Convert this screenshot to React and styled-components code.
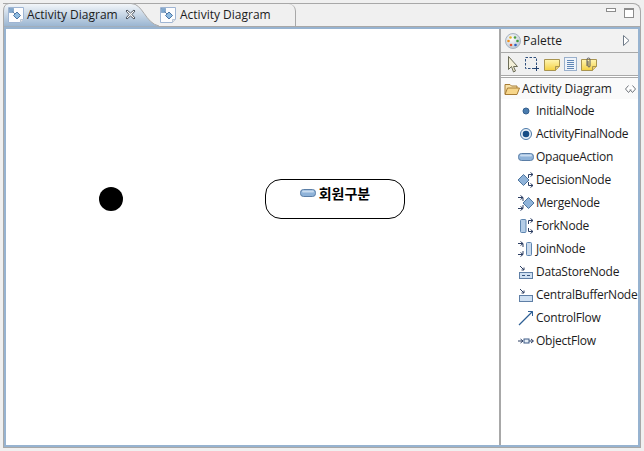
import React from "react";
import styled, { createGlobalStyle } from "styled-components";

const GlobalStyle = createGlobalStyle`
  html, body {
    margin: 0;
    padding: 0;
    background: #f0f0f0;
  }
`;

const FONT = `"Open Sans", "Noto Sans", "Liberation Sans", "Noto Sans CJK KR", sans-serif`;

/* ---- small drawings ---- */

const DiagramIcon = () => (
  <svg width="16" height="16" viewBox="0 0 16 16">
    <path d="M.5.5h15v12l-3 3H.5z" fill="#fdfdfe" stroke="#9fb5d3" />
    <rect x="1.500" y="1.500" width="4" height="4" fill="#7fa8cf" stroke="#6a8fb8" strokeWidth=".6" />
    <path d="M4.500 4.500L7 7" stroke="#5d7fa8" />
    <path d="M9 5l3.500 3.500L9 12 5.500 8.500z" fill="#8fbbe0" stroke="#4d76a5" />
    <path d="M12.500 15.500v-3h3" fill="#e4e4e4" stroke="#b8c4d4" />
  </svg>
);

const CloseIcon = () => (
  <svg width="11" height="11" viewBox="0 0 11 11">
    <path
      d="M1 2l1-1 3.500 3L9 1l1 1-3 3.500L10 9l-1 1-3.500-3L2 10 1 9l3-3.500z"
      fill="#fbfbfb"
      stroke="#4f5660"
    />
  </svg>
);

const PaletteIcon = () => (
  <svg width="16" height="16" viewBox="0 0 16 16">
    <defs>
      <radialGradient id="pal" cx="40%" cy="35%" r="70%">
        <stop offset="0" stopColor="#ffffff" />
        <stop offset="1" stopColor="#b8c4d2" />
      </radialGradient>
    </defs>
    <circle cx="8" cy="8" r="7.500" fill="url(#pal)" stroke="#a9b4c0" />
    <circle cx="5.500" cy="4.500" r="1.300" fill="#e2b02c" />
    <circle cx="10" cy="4.500" r="1.300" fill="#4aa03c" />
    <circle cx="3.500" cy="8" r="1.300" fill="#ef8f1e" />
    <circle cx="12.500" cy="8" r="1.300" fill="#3f9a3a" />
    <circle cx="6" cy="12" r="1.300" fill="#e0502c" />
    <circle cx="10.500" cy="12" r="1.300" fill="#2f5fc0" />
  </svg>
);

const ArrowTool = () => (
  <svg width="15" height="17" viewBox="0 0 15 17">
    <path d="M3.500 .5v13l3-3 2 5.500 2-1-2-4.500h4z" fill="#f3efd8" stroke="#6d6d58" />
  </svg>
);

const MarqueeTool = () => (
  <svg width="16" height="16" viewBox="0 0 16 16">
    <rect x="1.500" y="1.500" width="11" height="11" fill="none" stroke="#2f4f7c" strokeDasharray="2.500 1.500" />
    <path d="M12.500 10v5M10 12.500h5" stroke="#22406e" />
  </svg>
);

const NoteShape = ({ clip }) => (
  <svg width="16" height="14" viewBox="0 0 16 14">
    <defs>
      <linearGradient id="note" x1="0" y1="0" x2="0" y2="1">
        <stop offset="0" stopColor="#fff6b4" />
        <stop offset="1" stopColor="#f4d040" />
      </linearGradient>
    </defs>
    <path d="M.5 2.500h15v7l-4 4H.5z" fill="url(#note)" stroke="#a89450" />
    <path d="M11.500 13.500v-4h4" fill="#e8cc70" stroke="#a89450" />
    {clip && (
      <path d="M6 9V2.500a1.500 1.500 0 0 1 3 0V9a1 1 0 0 1-2 0V4" fill="none" stroke="#5a5a60" />
    )}
  </svg>
);

const TextTool = () => (
  <svg width="13" height="14" viewBox="0 0 13 14">
    <rect x=".5" y=".5" width="12" height="13" fill="#eef3fa" stroke="#9ab0cc" />
    <path d="M3 3.500h7M3 5.500h7M3 7.500h7M3 9.500h7M3 11.500h7" stroke="#5f86b6" />
  </svg>
);

const FolderIcon = () => (
  <svg width="16" height="14" viewBox="0 0 16 14">
    <path d="M1 12V2.500h5l1.500 1.500H13v2" fill="#f9e2a8" stroke="#a77c35" />
    <path d="M1 12.500l2.500-6.500h12L13 12.500z" fill="#f7d68a" stroke="#a77c35" />
  </svg>
);

const SplitArrows = () => (
  <path
    d="M10.500 6V2.500H15M12.500.5l2.500 2-2.500 2M10.500 10v3.500H15M12.500 11.500l2.500 2-2.500 2"
    fill="none"
    stroke="#2c3e63"
  />
);

const MergeArrows = () => (
  <path
    d="M0 2.500h5V6M0 13.500h5V10M2.500.5l2.500 2-2.500 2M2.500 11.500l2.500 2-2.500 2"
    fill="none"
    stroke="#2c3e63"
  />
);

const blueFill = "#8fb3d9";

const ICONS = {
  initial: (
    <svg width="16" height="16" viewBox="0 0 16 16">
      <circle cx="8" cy="8" r="3" fill="#4a7cae" stroke="#35608f" />
    </svg>
  ),
  final: (
    <svg width="16" height="16" viewBox="0 0 16 16">
      <circle cx="8" cy="8" r="5.500" fill="#eaf1f8" stroke="#4a78a8" />
      <circle cx="8" cy="8" r="3.300" fill="#174d86" />
    </svg>
  ),
  action: (
    <svg width="16" height="16" viewBox="0 0 16 16">
      <rect x=".5" y="4.500" width="15" height="7" rx="3" fill={blueFill} stroke="#5b7ea6" />
      <rect x="2" y="5.500" width="12" height="2" rx="1" fill="#c9dcef" />
    </svg>
  ),
  decision: (
    <svg width="16" height="16" viewBox="0 0 16 16">
      <path d="M5.500 2.500l5.500 5.500-5.500 5.500L0 8z" fill={blueFill} stroke="#4f769f" />
      <SplitArrows />
    </svg>
  ),
  merge: (
    <svg width="16" height="16" viewBox="0 0 16 16">
      <path d="M10.500 2.500L16 8l-5.500 5.500L5 8z" fill={blueFill} stroke="#4f769f" />
      <MergeArrows />
    </svg>
  ),
  fork: (
    <svg width="16" height="16" viewBox="0 0 16 16">
      <rect x="2.500" y="1.500" width="5.500" height="13" rx="1" fill="#b3cce6" stroke="#5f86b0" />
      <SplitArrows />
    </svg>
  ),
  join: (
    <svg width="16" height="16" viewBox="0 0 16 16">
      <rect x="8.500" y="1.500" width="5" height="13" rx="1" fill="#c8d9ec" stroke="#5f86b0" />
      <MergeArrows />
    </svg>
  ),
  store: (
    <svg width="16" height="16" viewBox="0 0 16 16">
      <rect x="1.500" y="8.500" width="13" height="6" fill="#cfe0f2" stroke="#5f7fa6" />
      <path d="M4 11.500h3M9 11.500h3" stroke="#34527c" />
      <path d="M2 2l4 4M6 3.500V6H3.500" fill="none" stroke="#2c3e63" />
    </svg>
  ),
  buffer: (
    <svg width="16" height="16" viewBox="0 0 16 16">
      <rect x="1.500" y="8.500" width="13" height="6" fill="#cfe0f2" stroke="#5f7fa6" />
      <path d="M2 2l4 4M6 3.500V6H3.500" fill="none" stroke="#2c3e63" />
    </svg>
  ),
  control: (
    <svg width="16" height="16" viewBox="0 0 16 16">
      <path d="M1 15L14.500 1.500" stroke="#2e5f94" strokeWidth="1.300" />
      <path d="M10 1.500H14.500V6" fill="none" stroke="#2e5f94" />
    </svg>
  ),
  object: (
    <svg width="16" height="16" viewBox="0 0 16 16">
      <path d="M0 8h4.500M2.500 6l2.500 2-2.500 2M11 8h4M13 6l2.500 2-2.500 2" fill="none" stroke="#2c3e63" />
      <rect x="6" y="6" width="5" height="4" fill="#e8f0f8" stroke="#3c5a86" />
    </svg>
  ),
};

const NODES = [
  ["initial", "InitialNode"],
  ["final", "ActivityFinalNode"],
  ["action", "OpaqueAction"],
  ["decision", "DecisionNode"],
  ["merge", "MergeNode"],
  ["fork", "ForkNode"],
  ["join", "JoinNode"],
  ["store", "DataStoreNode"],
  ["buffer", "CentralBufferNode"],
  ["control", "ControlFlow"],
  ["object", "ObjectFlow"],
];

/* ---- page ---- */

const App = () => (
  <Page>
    <GlobalStyle />
    <Frame>
      <TabBar>
        <ActiveTab>
          <TabShape width="156" height="24" viewBox="0 0 156 24">
            <defs>
              <linearGradient id="tabfill" x1="0" y1="0" x2="0" y2="1">
                <stop offset="0" stopColor="#f4f7fa" />
                <stop offset="1" stopColor="#97b3d0" />
              </linearGradient>
            </defs>
            <path
              d="M0.500 24V8Q0.500 1 6 .5H128C140 .5 142 20 156 23V24Z"
              fill="url(#tabfill)"
              stroke="#a8a8a8"
            />
          </TabShape>
          <DiagramIcon />
          <ActiveLabel>Activity Diagram</ActiveLabel>
          <CloseSlot>
            <CloseIcon />
          </CloseSlot>
        </ActiveTab>
        <InactiveTab>
          <DiagramIcon />
          <TabLabel>Activity Diagram</TabLabel>
        </InactiveTab>
        <TabFill>
          <MinButton />
          <MaxButton />
        </TabFill>
      </TabBar>
      <Body>
        <Canvas>
          <InitialNode />
          <ActionNode>
            <ActionIcon>{ICONS.action}</ActionIcon>
            <ActionName>회원구분</ActionName>
          </ActionNode>
        </Canvas>
        <Palette>
          <PaletteHeader>
            <PaletteIcon />
            <PaletteTitle>Palette</PaletteTitle>
            <svg width="7" height="11" viewBox="0 0 7 11">
              <path d="M.5.5l5.500 5-5.500 5z" fill="#fff" stroke="#6e7a88" />
            </svg>
          </PaletteHeader>
          <ToolRow>
            <ArrowTool />
            <MarqueeTool />
            <NoteShape />
            <TextTool />
            <NoteShape clip />
          </ToolRow>
          <SectionHeader>
            <FolderIcon />
            <SectionTitle>Activity Diagram</SectionTitle>
            <svg width="11" height="8" viewBox="0 0 11 8">
              <path d="M3.500.5L.5 4l3 3.500L6 4.500M7.500.5l3 3.500-3 3.500L5 4.500" fill="#fff" stroke="#70757c" />
            </svg>
          </SectionHeader>
          <NodeList>
            {NODES.map(([icon, label]) => (
              <NodeRow key={label}>
                <NodeIcon>{ICONS[icon]}</NodeIcon>
                {label}
              </NodeRow>
            ))}
          </NodeList>
        </Palette>
      </Body>
    </Frame>
  </Page>
);

const Page = styled.div`
  width: 644px;
  height: 451px;
  padding: 3px;
  box-sizing: border-box;
  background: #f0f0f0;
  font-family: ${FONT};
  font-size: 12px;
  color: #1c1c1c;
  overflow: hidden;
`;

const Frame = styled.div`
  width: 638px;
  height: 445px;
  display: flex;
  flex-direction: column;
`;

const TabBar = styled.div`
  height: 24px;
  flex: none;
  display: flex;
  box-sizing: border-box;
  border-top: 1px solid #a8a8a8;
  border-right: 1px solid #a8a8a8;
  border-top-right-radius: 8px;
`;

const ActiveTab = styled.div`
  position: relative;
  width: 151px;
  height: 23px;
  flex: none;
  margin-top: -1px;
  padding: 4px 0 0 5px;
  box-sizing: border-box;
  display: flex;
  align-items: flex-start;
  z-index: 1;
  & > svg:not(:first-child) {
    position: relative;
  }
`;

const TabShape = styled.svg`
  position: absolute;
  left: 0;
  top: 0;
`;

const TabLabel = styled.span`
  position: relative;
  margin-left: 4px;
  line-height: 16px;
  white-space: nowrap;
`;

const ActiveLabel = styled(TabLabel)`
  margin-left: 3px;
`;

const CloseSlot = styled.span`
  position: relative;
  margin: 2px 0 0 7px;
  display: flex;
`;

const InactiveTab = styled.div`
  width: 142px;
  height: 23px;
  flex: none;
  padding: 3px 0 0 6px;
  box-sizing: border-box;
  display: flex;
  align-items: flex-start;
  border-right: 1px solid #a8a8a8;
  border-bottom: 1px solid #a8a8a8;
  border-top-right-radius: 7px;
`;

const TabFill = styled.div`
  flex: 1;
  height: 23px;
  box-sizing: border-box;
  border-bottom: 1px solid #a8a8a8;
  display: flex;
  justify-content: flex-end;
  gap: 8px;
  padding: 4px 6px 0 0;
`;

const MinButton = styled.div`
  width: 8px;
  height: 2px;
  border: 1px solid #8c8c8c;
  background: #fff;
`;

const MaxButton = styled.div`
  width: 8px;
  height: 7px;
  border: 1px solid #8c8c8c;
  border-top-width: 2px;
  background: #fff;
`;

const Body = styled.div`
  flex: 1;
  min-height: 0;
  display: flex;
  box-sizing: border-box;
  padding: 2px;
  background: #97b3d0;
  border: 1px solid #a8a8a8;
  border-top: none;
`;

const Canvas = styled.div`
  position: relative;
  flex: 1;
  background: #fff;
`;

const InitialNode = styled.div`
  position: absolute;
  left: 93px;
  top: 158px;
  width: 24px;
  height: 24px;
  border-radius: 50%;
  background: #000;
`;

const ActionNode = styled.div`
  position: absolute;
  left: 259px;
  top: 150px;
  width: 140px;
  height: 40px;
  box-sizing: border-box;
  border: 1px solid #000;
  border-radius: 16px;
  background: #fff;
  display: flex;
  justify-content: center;
  align-items: flex-start;
  padding-top: 5px;
`;

const ActionIcon = styled.span`
  display: flex;
  margin-right: 3px;
`;

const ActionName = styled.span`
  font-family: "Noto Sans CJK KR", sans-serif;
  font-weight: 700;
  font-size: 14px;
  line-height: 16px;
  color: #000;
`;

const Palette = styled.div`
  width: 139px;
  flex: none;
  box-sizing: border-box;
  border-left: 2px solid #a8a8a8;
  display: flex;
  flex-direction: column;
  background: #fff;
`;

const PaletteHeader = styled.div`
  height: 24px;
  flex: none;
  box-sizing: border-box;
  display: flex;
  align-items: center;
  padding: 0 8px 0 4px;
  background: #f2f2f2;
  border-bottom: 1px solid #a8a8a8;
`;

const PaletteTitle = styled.span`
  flex: 1;
  margin-left: 2px;
`;

const ToolRow = styled.div`
  height: 23px;
  flex: none;
  box-sizing: border-box;
  display: flex;
  align-items: center;
  gap: 4px;
  padding: 0 4px;
  background: #f0f0f0;
  border-bottom: 1px solid #a8a8a8;
`;

const SectionHeader = styled.div`
  height: 22px;
  flex: none;
  box-sizing: border-box;
  display: flex;
  align-items: center;
  padding: 0 2px 0 3px;
  border-top: 1px solid #a8a8a8;
  margin-top: 1px;
  background: #fafafa;
`;

const SectionTitle = styled.span`
  flex: 1;
  margin-left: 2px;
  letter-spacing: -.05px;
`;

const NodeList = styled.div`
  display: flex;
  flex-direction: column;
`;

const NodeRow = styled.div`
  height: 23px;
  display: flex;
  align-items: center;
  padding-left: 17px;
  letter-spacing: -.25px;
  white-space: nowrap;
`;

const NodeIcon = styled.span`
  display: flex;
  width: 16px;
  margin-right: 2px;
`;

export default App;
